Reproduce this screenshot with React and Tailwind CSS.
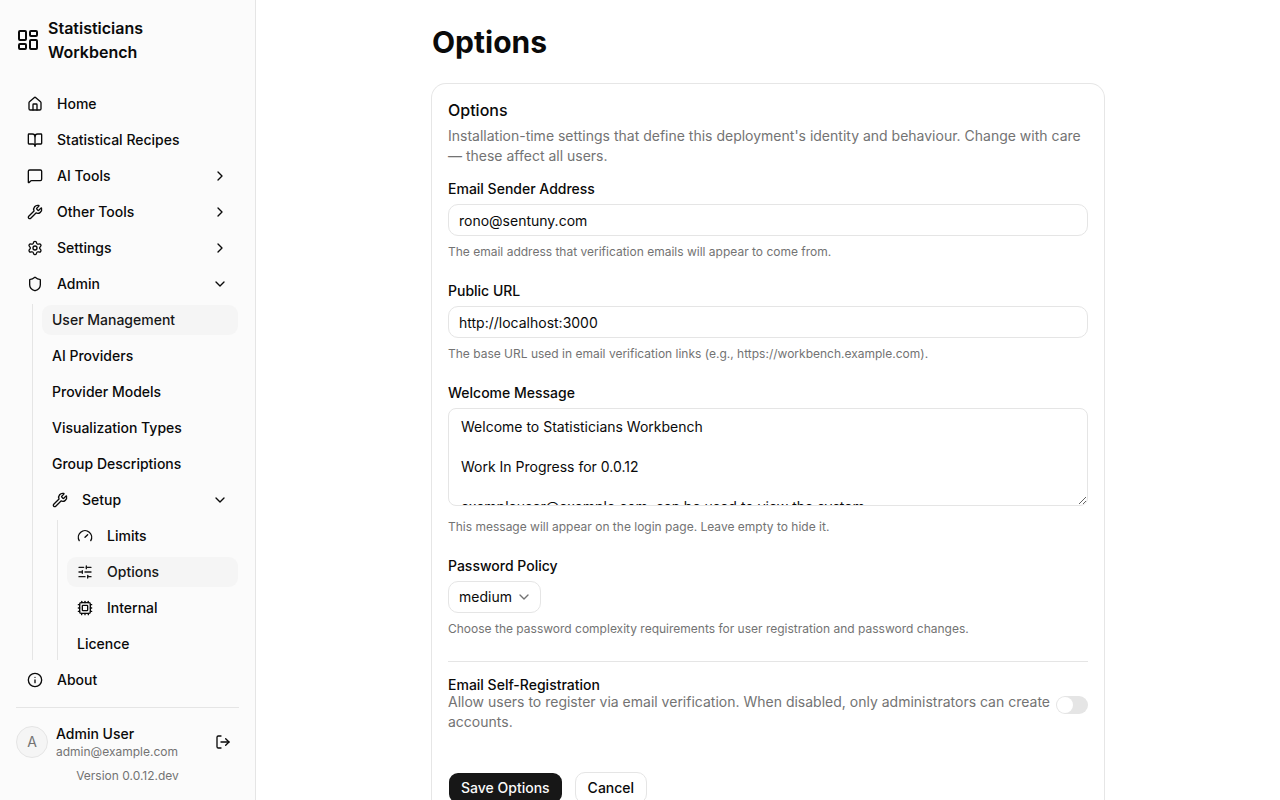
import { useState } from "react";
import {
  BookOpen,
  ChevronDown,
  ChevronRight,
  Cpu,
  Gauge,
  House,
  Info,
  LayoutDashboard,
  LogOut,
  MessageSquare,
  Settings,
  Shield,
  SlidersHorizontal,
  Wrench,
} from "lucide-react";

const navItems = [
  { label: "Home", icon: House },
  { label: "Statistical Recipes", icon: BookOpen },
  { label: "AI Tools", icon: MessageSquare, children: [] },
  { label: "Other Tools", icon: Wrench, children: [] },
  { label: "Settings", icon: Settings, children: [] },
  {
    label: "Admin",
    icon: Shield,
    open: true,
    children: [
      { label: "User Management", active: true },
      { label: "AI Providers" },
      { label: "Provider Models" },
      { label: "Visualization Types" },
      { label: "Group Descriptions" },
      {
        label: "Setup",
        icon: Wrench,
        open: true,
        children: [
          { label: "Limits", icon: Gauge },
          { label: "Options", icon: SlidersHorizontal, active: true },
          { label: "Internal", icon: Cpu },
          { label: "Licence" },
        ],
      },
    ],
  },
  { label: "About", icon: Info },
];

const initialMessage = `Welcome to Statisticians Workbench

Work In Progress for 0.0.12

exampleuser@example.com  can be used to view the system.`;

const NavItem = ({ item }) => {
  const [open, setOpen] = useState(Boolean(item.open));
  const Icon = item.icon;
  const Chevron = open ? ChevronDown : ChevronRight;
  const rowClass = `flex h-8 w-full items-center gap-3.5 rounded-[10px] border border-transparent bg-clip-padding px-2.5 text-sm font-medium hover:bg-neutral-100 ${
    item.active ? "bg-neutral-100 text-neutral-900" : ""
  }`;

  if (!item.children) {
    return (
      <li>
        <a href="#" className={rowClass}>
          {Icon && <Icon className="size-4 shrink-0" />}
          {item.label}
        </a>
      </li>
    );
  }

  return (
    <li>
      <button
        type="button"
        aria-expanded={open}
        onClick={() => setOpen(!open)}
        className={rowClass}
      >
        <Icon className="size-4 shrink-0" />
        {item.label}
        <Chevron className="ml-auto size-4 shrink-0" />
      </button>
      {open && item.children.length > 0 && (
        <ul className="mt-1 ml-4 space-y-1 border-l border-neutral-200 pl-2">
          {item.children.map((child) => (
            <NavItem key={child.label} item={child} />
          ))}
        </ul>
      )}
    </li>
  );
};

const Sidebar = () => (
  <aside className="sticky top-0 flex h-screen w-64 shrink-0 flex-col border-r border-neutral-200 bg-neutral-100/40 p-4">
    <div className="mb-6 flex items-center gap-2">
      <LayoutDashboard className="size-6 shrink-0" />
      <span className="max-w-40 font-semibold">Statisticians Workbench</span>
    </div>

    <nav>
      <ul className="space-y-1">
        {navItems.map((item) => (
          <NavItem key={item.label} item={item} />
        ))}
      </ul>
    </nav>

    <div className="mt-auto border-t border-neutral-200 pt-4">
      <div className="flex items-center gap-2">
        <div className="flex size-8 shrink-0 items-center justify-center rounded-full border border-neutral-200 bg-neutral-100 text-sm text-neutral-500">
          A
        </div>
        <div className="min-w-0 flex-1">
          <p className="truncate text-sm font-medium">Admin User</p>
          <p className="truncate text-xs text-neutral-500">admin@example.com</p>
        </div>
        <button
          type="button"
          aria-label="Log out"
          className="flex size-8 items-center justify-center rounded-[10px] hover:bg-neutral-100"
        >
          <LogOut className="size-4" />
        </button>
      </div>
      <p className="mt-2 text-center text-xs text-neutral-500">Version 0.0.12.dev</p>
    </div>
  </aside>
);

const Field = ({ id, label, help, children }) => (
  <div className="space-y-2">
    <label htmlFor={id} className="flex text-sm leading-none font-medium">
      {label}
    </label>
    {children}
    <p className="text-xs text-neutral-500">{help}</p>
  </div>
);

const inputClass =
  "block h-8 w-full rounded-[10px] border border-neutral-200 px-2.5 text-sm outline-none focus:border-neutral-400";

const OptionsForm = () => {
  const [sender, setSender] = useState("rono@sentuny.com");
  const [publicUrl, setPublicUrl] = useState("http://localhost:3000");
  const [message, setMessage] = useState(initialMessage);
  const [policy, setPolicy] = useState("medium");
  const [selfRegistration, setSelfRegistration] = useState(false);

  return (
    <form onSubmit={(e) => e.preventDefault()} className="space-y-6">
      <Field
        id="sender"
        label="Email Sender Address"
        help="The email address that verification emails will appear to come from."
      >
        <input
          id="sender"
          type="email"
          value={sender}
          onChange={(e) => setSender(e.target.value)}
          className={inputClass}
        />
      </Field>

      <Field
        id="publicUrl"
        label="Public URL"
        help="The base URL used in email verification links (e.g., https://workbench.example.com)."
      >
        <input
          id="publicUrl"
          type="url"
          value={publicUrl}
          onChange={(e) => setPublicUrl(e.target.value)}
          className={inputClass}
        />
      </Field>

      <Field
        id="message"
        label="Welcome Message"
        help="This message will appear on the login page. Leave empty to hide it."
      >
        <textarea
          id="message"
          rows={4}
          value={message}
          onChange={(e) => setMessage(e.target.value)}
          className="mb-[13px] block w-full rounded-lg border border-neutral-200 px-3 py-2 text-sm outline-none focus:border-neutral-400"
        />
      </Field>

      <Field
        id="policy"
        label="Password Policy"
        help="Choose the password complexity requirements for user registration and password changes."
      >
        <div className="relative w-fit">
          <select
            id="policy"
            value={policy}
            onChange={(e) => setPolicy(e.target.value)}
            className="block h-8 w-[93px] appearance-none rounded-[10px] border border-neutral-200 pr-7 pl-2.5 text-sm outline-none"
          >
            <option value="low">low</option>
            <option value="medium">medium</option>
            <option value="high">high</option>
          </select>
          <ChevronDown className="pointer-events-none absolute top-2 right-[9px] size-4 text-neutral-500" />
        </div>
      </Field>

      {/* Self-registration toggle */}
      <div className="flex items-center justify-between border-t border-neutral-200 pt-4">
        <div>
          <label htmlFor="selfRegistration" className="flex text-sm leading-none font-medium">
            Email Self-Registration
          </label>
          <p className="text-sm text-neutral-500">
            Allow users to register via email verification. When disabled, only administrators can
            create accounts.
          </p>
        </div>
        <input
          id="selfRegistration"
          type="checkbox"
          role="switch"
          checked={selfRegistration}
          onChange={(e) => setSelfRegistration(e.target.checked)}
          className="flex h-[18px] w-8 shrink-0 appearance-none items-center rounded-full border border-transparent bg-neutral-200 before:size-4 before:rounded-full before:bg-white checked:bg-neutral-900 checked:before:ml-auto"
        />
      </div>

      <div className="flex gap-3 pt-4">
        <button
          type="submit"
          className="h-8 rounded-[10px] border border-transparent bg-neutral-900 bg-clip-padding px-3 text-sm font-medium text-neutral-50"
        >
          Save Options
        </button>
        <button
          type="button"
          className="h-8 rounded-[10px] border border-neutral-200 bg-white px-3 text-sm font-medium"
        >
          Cancel
        </button>
      </div>
    </form>
  );
};

const App = () => {
  return (
    <div className="flex min-h-screen bg-white font-[Inter,sans-serif] text-neutral-950">
      <Sidebar />
      <main className="min-w-0 flex-1 p-6">
        <div className="mx-auto max-w-2xl">
          <h1 className="mb-6 text-3xl font-bold">Options</h1>
          <section className="rounded-[14px] bg-white p-4 ring-1 ring-neutral-950/10">
            <h2 className="mb-1.5 text-base leading-5 font-medium">Options</h2>
            <p className="mb-4 text-sm text-neutral-500">
              Installation-time settings that define this deployment's identity and behaviour.
              Change with care — these affect all users.
            </p>
            <OptionsForm />
          </section>
        </div>
      </main>
    </div>
  );
};

export default App;
